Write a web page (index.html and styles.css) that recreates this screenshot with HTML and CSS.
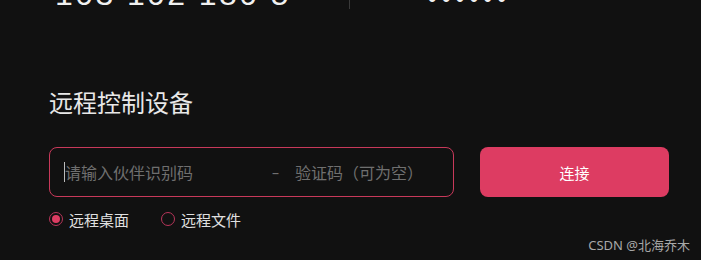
FILE: index.html
```html
<!DOCTYPE html>
<html lang="zh-CN">
<head>
  <meta charset="UTF-8">
  <title>远程控制</title>
  <link rel="stylesheet" href="styles.css">
</head>
<body>

<div class="device-bar">
  <div class="device-id">103 102 180 5</div>
  <div class="divider"></div>
  <div class="device-pass">••••••</div>
</div>

<h2 class="title">远程控制设备</h2>

<div class="connect-row">
  <div class="field">
    <label class="field-id">
      <span class="caret"></span>
      <input type="text" id="partnerId" placeholder="请输入伙伴识别码">
    </label>
    <span class="sep">–</span>
    <input type="text" id="verifyCode" class="field-code" placeholder="验证码（可为空）">
  </div>
  <button class="connect-btn" onclick="connecter()">连接</button>
</div>

<div class="mode-row">
  <label class="mode"><span class="radio checked"></span>远程桌面</label>
  <label class="mode"><span class="radio"></span>远程文件</label>
</div>

<div class="watermark">CSDN @北海乔木</div>

<script>
  function connecter() {
    const id = document.getElementById("partnerId").value;
    if (!id) return;
  }
</script>

</body>
</html>
```

FILE: styles.css
```css
body {
  margin: 0;
  background-color: #111111;
  color: #e6e6e6;
  font-family: "Noto Sans", "Noto Sans CJK SC", sans-serif;
  height: 260px;
  overflow: hidden;
  position: relative;
}

.device-bar {
  display: flex;
  align-items: flex-start;
  height: 40px;
  margin-top: -26px;
}

.device-id {
  width: 349px;
  padding-left: 55px;
  box-sizing: border-box;
  font-family: "Liberation Sans", sans-serif;
  font-size: 32px;
  line-height: 40px;
  letter-spacing: 2.4px;
  color: #f0f0f0;
}

.divider {
  width: 1px;
  height: 35px;
  background-color: #3a3a3a;
}

.device-pass {
  margin-left: 78px;
  padding-top: 5px;
  font-family: "Liberation Sans", sans-serif;
  font-size: 24px;
  line-height: 40px;
  letter-spacing: 5.5px;
  color: #f0f0f0;
}

.title {
  margin: 73px 0 0 49px;
  font-size: 24px;
  font-weight: normal;
  line-height: 32px;
  color: #e8e8e8;
}

.connect-row {
  display: flex;
  margin: 28px 0 0 49px;
}

.field {
  display: flex;
  align-items: center;
  width: 405px;
  height: 50px;
  box-sizing: border-box;
  border: 1px solid #c8395a;
  border-radius: 8px;
  padding-left: 14px;
}

.field input {
  background: transparent;
  border: none;
  outline: none;
  color: #ddd;
  font-family: "Noto Sans CJK SC", sans-serif;
  font-size: 16px;
  padding: 0;
}

.field input::placeholder {
  color: #6f6f6f;
}

.field-id {
  display: flex;
  align-items: center;
  width: 205px;
}

.field-id input {
  width: 200px;
}

.caret {
  width: 1px;
  height: 20px;
  background-color: #bbb;
}

.sep {
  width: 23px;
  color: #6f6f6f;
  font-size: 14px;
  margin-left: 3px;
}

.field-code {
  width: 150px;
}

.connect-btn {
  width: 189px;
  height: 50px;
  margin-left: 26px;
  background-color: #dd3c62;
  border: none;
  border-radius: 8px;
  color: #fff;
  font-family: "Noto Sans CJK SC", sans-serif;
  font-size: 15px;
  cursor: pointer;
}

.mode-row {
  display: flex;
  margin: 12px 0 0 49px;
  height: 20px;
  align-items: center;
}

.mode {
  display: flex;
  align-items: center;
  width: 112px;
  font-family: "Noto Sans CJK SC", sans-serif;
  font-size: 15px;
  color: #e0e0e0;
}

.radio {
  width: 12px;
  height: 12px;
  border: 1px solid #b8355a;
  border-radius: 50%;
  margin-right: 6px;
  position: relative;
}

.radio.checked::after {
  content: "";
  position: absolute;
  left: 2px;
  top: 2px;
  width: 8px;
  height: 8px;
  border-radius: 50%;
  background-color: #dd3c62;
}

.watermark {
  position: absolute;
  right: 11px;
  bottom: 6px;
  font-size: 13px;
  color: #a8a8a8;
}
```
